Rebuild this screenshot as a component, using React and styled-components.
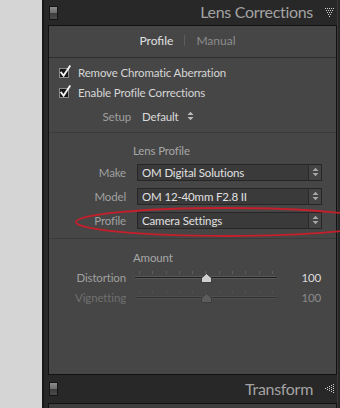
import React from 'react'
import styled, { createGlobalStyle } from 'styled-components'

const GlobalStyle = createGlobalStyle`
  html, body {
    margin: 0;
    padding: 0;
    background: #d5d5d5;
  }
  body {
    font-family: Lato, "Open Sans", sans-serif;
  }
`

// dotted disclosure triangle, as in the panel headers
const DottedTriangle = ({ direction = 'down' }) => {
  const dots = []
  const rows = [5, 4, 3, 2, 1]
  rows.forEach((count, r) => {
    for (let i = 0; i < count; i++) {
      const along = r * 2
      const across = (5 - count) + i * 2
      if (direction === 'down') dots.push([across, along])
      else dots.push([8 - along, across])
    }
  })
  return (
    <svg width="10" height="10" viewBox="0 0 10 10" shapeRendering="crispEdges">
      {dots.map(([x, y], i) => (
        <rect key={i} x={x} y={y} width="1" height="1" fill="#d0d0d0" />
      ))}
    </svg>
  )
}

const CheckIcon = () => (
  <svg width="14" height="14" viewBox="0 0 14 14">
    <rect x="1.5" y="3.5" width="9" height="9" fill="#161616" stroke="#8a8a8a" strokeWidth="1" />
    <path d="M3.2 7.6 L5.6 10.6 L11.8 1.2" fill="none" stroke="#f2f2f2" strokeWidth="1.8" strokeLinecap="square" />
  </svg>
)

const UpDown = ({ color = '#bdbdbd' }) => (
  <svg width="7" height="10" viewBox="0 0 7 10">
    <path d="M0.5 4 L3.5 0.8 L6.5 4 Z" fill={color} />
    <path d="M0.5 6 L3.5 9.2 L6.5 6 Z" fill={color} />
  </svg>
)

const Thumb = ({ color }) => (
  <svg width="11" height="10" viewBox="0 0 11 10">
    <path d="M0.5 9.5 L0.5 5 L5.5 0.5 L10.5 5 L10.5 9.5 Z" fill={color} stroke="#2a2a2a" strokeWidth="0.8" />
  </svg>
)

function Slider({ value, disabled }) {
  const ticks = [0, 1, 2, 3, 4, 5, 6, 7, 8, 9, 10]
  return (
    <Track>
      <Ticks>
        {ticks.map((t) => (
          <Tick key={t} />
        ))}
      </Ticks>
      <Rail />
      <ThumbWrap style={{ left: `${value}%` }}>
        <Thumb color={disabled ? '#777' : '#cfcfcf'} />
      </ThumbWrap>
    </Track>
  )
}

function Select({ value }) {
  return (
    <SelectBox>
      <SelectText>{value}</SelectText>
      <Stepper>
        <UpDown color="#a8a8a8" />
      </Stepper>
    </SelectBox>
  )
}

export default function App() {
  return (
    <>
      <GlobalStyle />
      <Page>
        <Gutter />
        <Sidebar>
          <Header>
            <Toggle />
            <Title>Lens Corrections</Title>
            <DottedTriangle direction="down" />
          </Header>

          <Panel>
            <Tabs>
              <Tab $active>Profile</Tab>
              <TabDivider />
              <Tab>Manual</Tab>
            </Tabs>

            <Section $height={75}>
              <CheckRow>
                <CheckIcon />
                <span>Remove Chromatic Aberration</span>
              </CheckRow>
              <CheckRow>
                <CheckIcon />
                <span>Enable Profile Corrections</span>
              </CheckRow>
              <SetupRow>
                <Label $width={82}>Setup</Label>
                <Value>Default</Value>
                <UpDown color="#bdbdbd" />
              </SetupRow>
            </Section>

            <Section $height={106}>
              <Heading>Lens Profile</Heading>
              <FieldRow>
                <Label $width={77}>Make</Label>
                <Select value="OM Digital Solutions" />
              </FieldRow>
              <FieldRow>
                <Label $width={77}>Model</Label>
                <Select value="OM 12-40mm F2.8 II" />
              </FieldRow>
              <FieldRow>
                <Label $width={77}>Profile</Label>
                <Select value="Camera Settings" />
              </FieldRow>
              <Annotation width="300" height="34" viewBox="0 0 300 34">
                <ellipse cx="153" cy="16" rx="150" ry="14" fill="none" stroke="#c41f2a" strokeWidth="1.9" />
              </Annotation>
            </Section>

            <LastSection>
              <Heading>Amount</Heading>
              <SliderRow>
                <Label $width={77}>Distortion</Label>
                <Slider value={50} />
                <Amount>100</Amount>
              </SliderRow>
              <SliderRow $disabled>
                <Label $width={77}>Vignetting</Label>
                <Slider value={50} disabled />
                <Amount>100</Amount>
              </SliderRow>
            </LastSection>
          </Panel>

          <Header $tall>
            <Toggle />
            <Title>Transform</Title>
            <DottedTriangle direction="left" />
          </Header>

          <NextPanel />
        </Sidebar>
      </Page>
    </>
  )
}

const Page = styled.div`
  display: flex;
  width: 340px;
  height: 408px;
  overflow: hidden;
`

const Gutter = styled.div`
  width: 42px;
  flex-shrink: 0;
  background: #d5d5d5;
`

const Sidebar = styled.div`
  flex: 1;
  display: flex;
  flex-direction: column;
  background: #282828;
  border-left: 2px solid #181818;
  padding: 0 1px 0 4px;
  box-shadow: inset -2px 0 0 #282828, inset -3px 0 0 #3a3a3a;
`

const Header = styled.div`
  height: ${(p) => (p.$tall ? 28 : 25)}px;
  flex-shrink: 0;
  display: flex;
  align-items: center;
  padding: 0 4px 0 1px;
  gap: 12px;
`

const Toggle = styled.div`
  width: 7px;
  height: 12px;
  border: 1px solid #151515;
  background: linear-gradient(#8e8e8e 0, #6a6a6a 50%, #3c3c3c 50%, #4a4a4a 100%);
`

const Title = styled.div`
  flex: 1;
  text-align: right;
  color: #a3a3a3;
  font-size: 16px;
  letter-spacing: -0.3px;
  margin-top: -2px;
`

const Panel = styled.div`
  flex-shrink: 0;
  height: 348px;
  margin-right: 2px;
  background: #464646;
  border: 1px solid #121212;
  display: flex;
  flex-direction: column;
`

const Tabs = styled.div`
  height: 32px;
  flex-shrink: 0;
  display: flex;
  align-items: center;
  justify-content: center;
  gap: 11px;
  border-bottom: 1px solid #2e2e2e;
  padding: 0 10px 2px 0;
  box-sizing: border-box;
`

const Tab = styled.span`
  font-size: 12px;
  color: ${(p) => (p.$active ? '#e0e0e0' : '#8d8d8d')};
`

const TabDivider = styled.span`
  width: 1px;
  height: 11px;
  background: #5c5c5c;
`

const Section = styled.div`
  position: relative;
  height: ${(p) => p.$height}px;
  flex-shrink: 0;
  display: flex;
  flex-direction: column;
  border-bottom: 1px solid #3a3a3a;
  padding-top: ${(p) => (p.$height === 75 ? 4 : 7)}px;
  box-sizing: border-box;
  font-size: 11.5px;
  letter-spacing: -0.15px;
`

const LastSection = styled.div`
  flex: 1;
  display: flex;
  flex-direction: column;
  padding-top: 8px;
  font-size: 11.5px;
  letter-spacing: -0.15px;
`

const CheckRow = styled.div`
  height: 20px;
  display: flex;
  align-items: center;
  gap: 6px;
  padding-left: 9px;
  color: #d6d6d6;
`

const SetupRow = styled.div`
  height: 28px;
  display: flex;
  align-items: center;
  color: #d6d6d6;
`

const Label = styled.span`
  width: ${(p) => p.$width}px;
  flex-shrink: 0;
  text-align: right;
  color: #a0a0a0;
  margin-right: 11px;
`

const Value = styled.span`
  margin-right: 8px;
  color: #dadada;
`

const Heading = styled.div`
  height: 20px;
  display: flex;
  align-items: center;
  padding-left: 84px;
  color: #a6a6a6;
`

const FieldRow = styled.div`
  height: 24px;
  display: flex;
  align-items: center;
`

const SelectBox = styled.div`
  width: 183px;
  height: 15px;
  display: flex;
  align-items: stretch;
  background: #3a3a3a;
  border: 1px solid #262626;
  box-sizing: content-box;
`

const SelectText = styled.div`
  flex: 1;
  padding-left: 4px;
  display: flex;
  align-items: center;
  color: #e0e0e0;
`

const Stepper = styled.div`
  width: 12px;
  display: flex;
  align-items: center;
  justify-content: center;
  border-left: 1px solid #2a2a2a;
  background: #444;
`

const Annotation = styled.svg`
  position: absolute;
  left: 24px;
  top: 73px;
  pointer-events: none;
`

const SliderRow = styled.div`
  height: 20px;
  display: flex;
  align-items: center;
  opacity: ${(p) => (p.$disabled ? 0.45 : 1)};
`

const Track = styled.div`
  position: relative;
  width: 144px;
  height: 14px;
  margin-left: -3px;
`

const Ticks = styled.div`
  position: absolute;
  left: 5px;
  right: 5px;
  top: 1px;
  display: flex;
  justify-content: space-between;
`

const Tick = styled.span`
  width: 1px;
  height: 3px;
  background: #5e5e5e;
`

const Rail = styled.div`
  position: absolute;
  left: 0;
  right: 0;
  top: 6px;
  height: 3px;
  border-radius: 2px;
  background: #1c1c1c;
  border: 1px solid #5a5a5a;
  box-sizing: border-box;
`

const ThumbWrap = styled.div`
  position: absolute;
  top: 3px;
  margin-left: -5px;
  display: flex;
`

const Amount = styled.span`
  margin-left: auto;
  margin-right: 15px;
  color: #dcdcdc;
`

const NextPanel = styled.div`
  flex: 1;
  margin-right: 2px;
  border: 1px solid #121212;
  border-bottom: none;
  background: #3e3e3e;
`
